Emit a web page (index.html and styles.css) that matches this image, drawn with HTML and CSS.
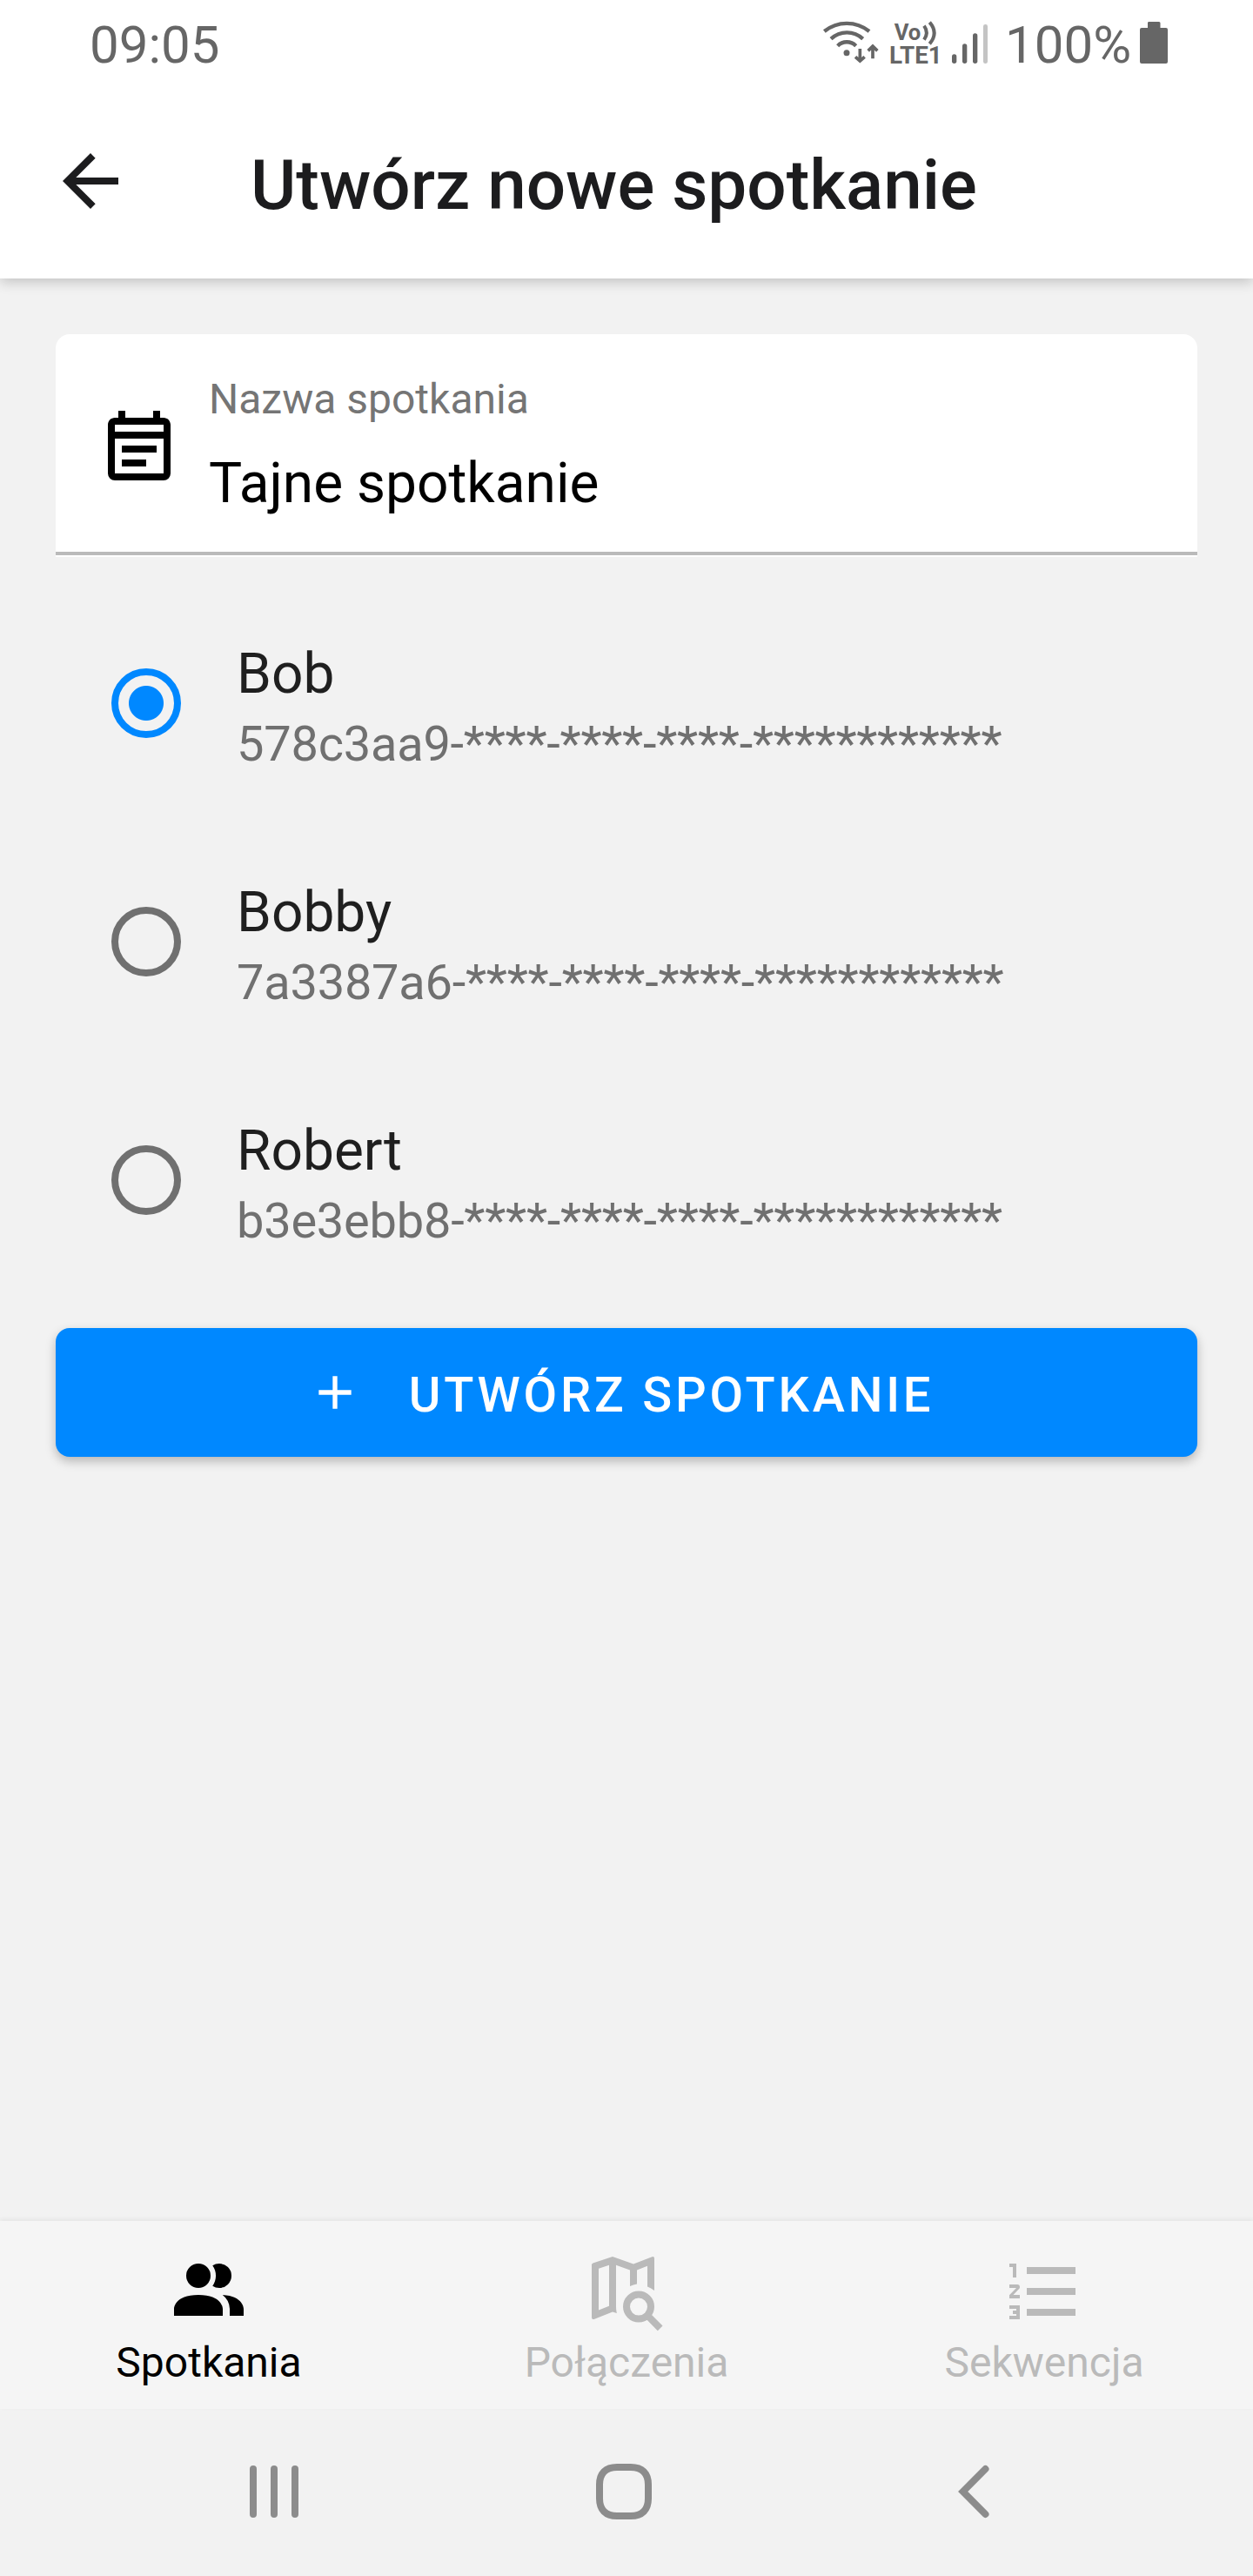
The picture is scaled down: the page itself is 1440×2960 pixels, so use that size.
FILE: index.html
```html
<!DOCTYPE html>
<html lang="pl">
<head>
<meta charset="utf-8">
<title>Utwórz nowe spotkanie</title>
<link rel="stylesheet" href="styles.css">
</head>
<body>
<div class="screen">
  <div class="top">
    <div class="status">
      <span class="clock">09:05</span>
      <svg class="status-icons" width="235" height="103" viewBox="0 0 705 309">
        <g fill="none" stroke="#666" stroke-width="13">
          <path d="M82 108A123 123 0 0 1 237 108M105 134A80 80 0 0 1 215 134M128 158A44 44 0 0 1 191 158"/>
          <path stroke-width="11" d="M205 168V206M249 202V164M189 196L205 210L221 196M233 175L249 159L265 175"/>
          <path stroke-width="12" d="M426 89Q443 113 426 137M445 77Q477 114 445 151"/>
        </g>
        <circle cx="159" cy="182" r="10.5" fill="#666"/>
        <g class="net">
          <text x="323" y="137" font-size="78" textLength="92" lengthAdjust="spacingAndGlyphs">Vo</text>
          <text x="306" y="218" font-size="84" textLength="182" lengthAdjust="spacingAndGlyphs">LTE1</text>
        </g>
        <g fill="#666">
          <rect x="522" y="187" width="16" height="32" rx="8"/>
          <rect x="558" y="151" width="16" height="68" rx="8"/>
          <rect x="594" y="115" width="16" height="104" rx="8"/>
          <rect x="630" y="84" width="15" height="135" rx="7" fill="#c4c4c4"/>
        </g>
      </svg>
      <span class="percent">100%</span>
      <svg width="32" height="48" viewBox="0 0 32 48" class="battery"><path fill="#666" d="M10 0H22a1.500 1.500 0 0 1 1.500 1.500V7H30a2 2 0 0 1 2 2V46a2 2 0 0 1-2 2H2a2 2 0 0 1-2-2V9a2 2 0 0 1 2-2H9V1.500A1.500 1.500 0 0 1 10 0z"/></svg>
    </div>
    <header class="appbar">
      <svg class="back" width="96" height="96" viewBox="0 0 24 24"><path d="M20 11v2H7.830l5.590 5.590L12 20l-8-8 8-8 1.410 1.410L7.830 11z"/></svg>
      <h1>Utwórz nowe spotkanie</h1>
    </header>
  </div>

  <main>
    <div class="field">
      <div class="field-body">
        <svg width="96" height="96" viewBox="0 0 24 24"><path d="M19 4h-1V2h-2v2H8V2H6v2H5c-1.110 0-2 .9-2 2v14a2 2 0 0 0 2 2h14a2 2 0 0 0 2-2V6c0-1.100-.9-2-2-2zm0 16H5V10h14v10zm0-12H5V6h14v2zm-2 4H7v2h10v-2zm-3 4H7v2h7v-2z"/></svg>
        <div>
          <div class="field-label">Nazwa spotkania</div>
          <div class="field-value">Tajne spotkanie</div>
        </div>
      </div>
      <div class="underline"></div>
    </div>

    <ul class="people">
      <li class="person">
        <span class="radio checked"></span>
        <div class="person-text"><div class="name">Bob</div><div class="uid">578c3aa9-****-****-****-************</div></div>
      </li>
      <li class="person">
        <span class="radio"></span>
        <div class="person-text"><div class="name">Bobby</div><div class="uid">7a3387a6-****-****-****-************</div></div>
      </li>
      <li class="person">
        <span class="radio"></span>
        <div class="person-text"><div class="name">Robert</div><div class="uid">b3e3ebb8-****-****-****-************</div></div>
      </li>
    </ul>

    <button class="create">
      <svg width="64" height="64" viewBox="0 0 24 24"><path fill="#fff" d="M19 13h-6v6h-2v-6H5v-2h6V5h2v6h6z"/></svg>
      <span>UTWÓRZ SPOTKANIE</span>
    </button>
  </main>

  <nav class="tabs">
    <div class="tab active">
      <svg width="96" height="96" viewBox="0 0 24 24"><path d="M16 17v2H2v-2s0-4 7-4 7 4 7 4m-3.500-9.500A3.500 3.500 0 1 0 9 11a3.500 3.500 0 0 0 3.500-3.500m3.440 5.500A5.320 5.320 0 0 1 18 17v2h4v-2s0-3.630-6.060-4M15 4a3.390 3.390 0 0 0-1.930.59 5 5 0 0 1 0 5.820A3.390 3.390 0 0 0 15 11a3.500 3.500 0 0 0 0-7z"/></svg>
      <span>Spotkania</span>
    </div>
    <div class="tab">
      <svg width="96" height="96" viewBox="0 0 24 24"><path fill-rule="evenodd" d="M2.350 3.860L8 2l6 2.100L19.350 2.040Q20 1.850 20 2.500V11.750Q19.100 11 18 10.600V4.700L15 5.850V9.900Q14 10.050 13 10.500V5.850L9 4.450V16.400Q9 17.400 9.200 18.250L8 17.850L2.650 19.970Q2 20.150 2 19.500V4.360Q2 4 2.350 3.860zM4 5.450V17.350L7 16.200V4.450z"/><path fill="none" stroke="currentColor" stroke-width="2" d="M12 16.400a3.500 3.500 0 1 0 7 0a3.500 3.500 0 1 0-7 0M18.300 19.200l3.370 3.400"/></svg>
      <span>Połączenia</span>
    </div>
    <div class="tab">
      <svg width="96" height="96" viewBox="0 0 24 24"><path d="M7 13v-2h14v2H7m0 6v-2h14v2H7M7 7V5h14v2H7M3 8V5H2V4h2v4H3m-1 9v-1h3v4H2v-1h2v-.5H3v-1h1V17H2m2.250-7a.75.75 0 0 1 .75.75c0 .2-.08.39-.21.52L3.120 13H5v1H2v-.92L4 11H2v-1h2.250z"/></svg>
      <span>Sekwencja</span>
    </div>
  </nav>

  <div class="system-nav">
    <svg width="64" height="64" viewBox="0 0 64 64"><path d="M8 6V58M32 6V58M56 6V58"/></svg>
    <svg width="64" height="64" viewBox="0 0 64 64"><path d="M24 4H40C53 4 60 11 60 24V40C60 53 53 60 40 60H24C11 60 4 53 4 40V24C4 11 11 4 24 4z"/></svg>
    <svg width="64" height="64" viewBox="0 0 64 64"><path d="M45.500 6L19.700 32L45.500 58"/></svg>
  </div>
</div>
</body>
</html>
```
FILE: styles.css
```css
* { box-sizing: border-box; }

body {
  margin: 0;
  background: #f2f2f2;
  font-family: Roboto, "Noto Sans", sans-serif;
}

svg { display: block; flex: none; }

.screen {
  width: 1440px;
  height: 2960px;
  display: flex;
  flex-direction: column;
  overflow: hidden;
}

.top {
  background: #fff;
  height: 320px;
  box-shadow: 0 4px 14px rgba(0, 0, 0, 0.2);
}

.status {
  height: 103px;
  padding: 0 98px 0 103px;
  display: flex;
  align-items: center;
  color: #666;
  font-size: 60px;
  line-height: 60px;
}

.status-icons { margin-left: auto; }
.net text { fill: #666; font-weight: 700; }
.percent { width: 155px; }
.battery { margin-bottom: 5px; }

.appbar {
  height: 217px;
  padding-left: 56px;
  display: flex;
  align-items: center;
  gap: 136px;
  color: #1c1c1e;
}

.back { margin-bottom: 7px; fill: currentColor; }

h1 {
  margin: 3px 0 0;
  font-size: 80px;
  font-weight: 500;
  line-height: 96px;
}

main {
  flex: 1;
  padding: 64px 64px 0;
}

.field {
  height: 256px;
  background: #fff;
  border-radius: 16px 16px 0 0;
}

.field-body {
  height: 250px;
  padding: 47px 48px 0;
  display: flex;
  gap: 32px;
}

.field-body svg { margin-top: 33px; }
.field-label { font-size: 48px; line-height: 56px; color: #757575; }
.field-value { margin-top: 29px; font-size: 64px; line-height: 80px; color: #000; }
.underline { height: 4px; background: #bababa; }

.people {
  list-style: none;
  margin: 31px 0 33px;
  padding: 0 64px;
}

.person {
  height: 274px;
  display: flex;
  align-items: center;
  gap: 64px;
}

.radio {
  width: 80px;
  height: 80px;
  border: 8px solid #707070;
  border-radius: 50%;
}

.radio.checked {
  border-color: #0088ff;
  background: radial-gradient(circle, #0088ff 19.5px, transparent 20.5px);
}

.person-text { margin-top: 13px; padding-top: 1px; }
.name { font-size: 64px; line-height: 80px; color: #1f1f1f; }
.uid { font-size: 56px; line-height: 80px; letter-spacing: -0.25px; color: #707070; }

.create {
  width: 100%;
  height: 148px;
  border: 0;
  border-radius: 16px;
  padding: 0 14px 0 0;
  background: #0088ff;
  color: #fff;
  box-shadow: 0 5px 12px rgba(0, 0, 0, 0.25);
  display: flex;
  align-items: center;
  justify-content: center;
  gap: 53px;
  font: 500 56px/66px Roboto, "Noto Sans", sans-serif;
  letter-spacing: 3.8px;
}

.create span { margin-top: 6px; }

.tabs {
  height: 216px;
  padding-top: 33px;
  display: grid;
  grid-template-columns: repeat(3, 480px);
  background: #f5f5f5;
  box-shadow: 0 -2px 5px rgba(0, 0, 0, 0.06);
}

.tab {
  display: flex;
  flex-direction: column;
  align-items: center;
  gap: 6px;
  color: #bababa;
  font-size: 48px;
  line-height: 56px;
}

.tab.active { color: #000; }
.tab svg { fill: currentColor; }

.system-nav {
  height: 192px;
  padding: 0 289px 2px 283px;
  display: flex;
  align-items: center;
  justify-content: space-between;
}

.system-nav path {
  fill: none;
  stroke: #8c8c8c;
  stroke-width: 8;
  stroke-linecap: round;
}
```
